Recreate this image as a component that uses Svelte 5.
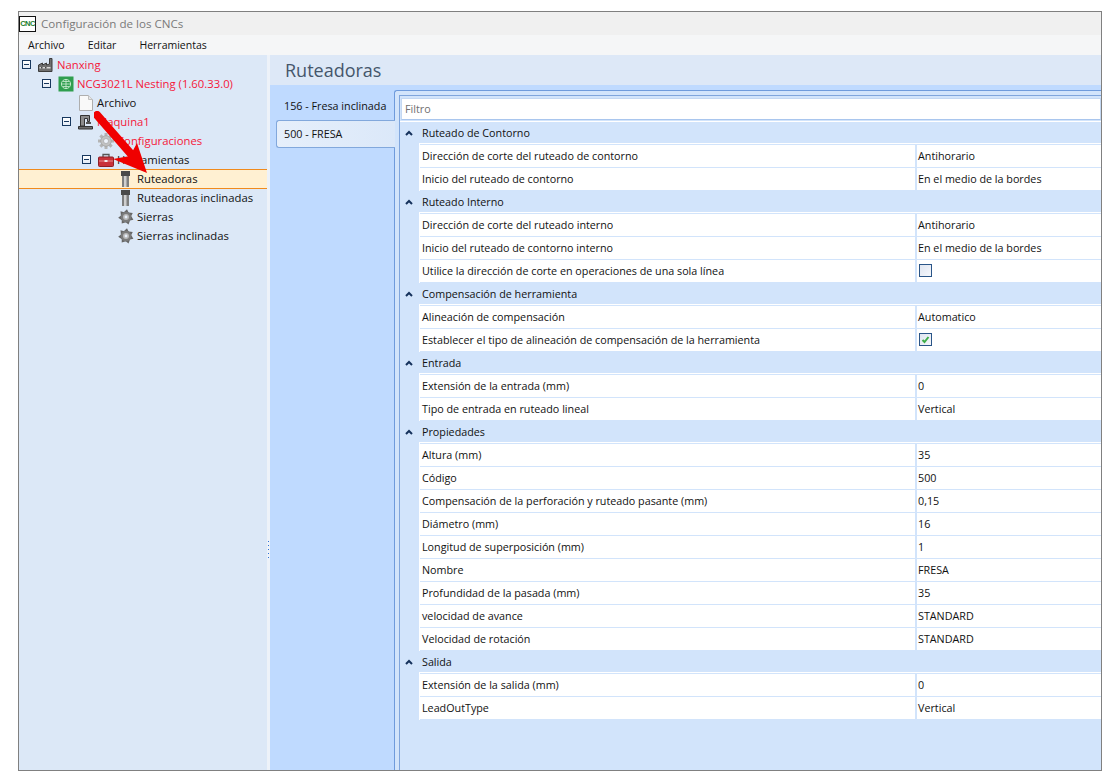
<script>
  const tree = [
    { d: 0, label: 'Nanxing', icon: 'factory', exp: true, red: true },
    { d: 1, label: 'NCG3021L Nesting (1.60.33.0)', icon: 'chip', exp: true, red: true },
    { d: 2, label: 'Archivo', icon: 'doc' },
    { d: 2, label: 'Maquina1', icon: 'machine', exp: true, red: true },
    { d: 3, label: 'Configuraciones', icon: 'gear', red: true },
    { d: 3, label: 'Herramientas', icon: 'toolbox', exp: true },
    { d: 4, label: 'Ruteadoras', icon: 'bit', sel: true },
    { d: 4, label: 'Ruteadoras inclinadas', icon: 'bit' },
    { d: 4, label: 'Sierras', icon: 'saw' },
    { d: 4, label: 'Sierras inclinadas', icon: 'saw' }
  ];

  const groups = [
    { title: 'Ruteado de Contorno', rows: [
      ['Dirección de corte del ruteado de contorno', 'Antihorario'],
      ['Inicio del ruteado de contorno', 'En el medio de la bordes']
    ]},
    { title: 'Ruteado Interno', rows: [
      ['Dirección de corte del ruteado interno', 'Antihorario'],
      ['Inicio del ruteado de contorno interno', 'En el medio de la bordes'],
      ['Utilice la dirección de corte en operaciones de una sola línea', false]
    ]},
    { title: 'Compensación de herramienta', rows: [
      ['Alineación de compensación', 'Automatico'],
      ['Establecer el tipo de alineación de compensación de la herramienta', true]
    ]},
    { title: 'Entrada', rows: [
      ['Extensión de la entrada (mm)', '0'],
      ['Tipo de entrada en ruteado lineal', 'Vertical']
    ]},
    { title: 'Propiedades', rows: [
      ['Altura (mm)', '35'],
      ['Código', '500'],
      ['Compensación de la perforación y ruteado pasante (mm)', '0,15'],
      ['Diámetro (mm)', '16'],
      ['Longitud de superposición (mm)', '1'],
      ['Nombre', 'FRESA'],
      ['Profundidad de la pasada (mm)', '35'],
      ['velocidad de avance', 'STANDARD'],
      ['Velocidad de rotación', 'STANDARD']
    ]},
    { title: 'Salida', rows: [
      ['Extensión de la salida (mm)', '0'],
      ['LeadOutType', 'Vertical']
    ]}
  ];

  const teeth = Array.from({ length: 8 }, (_, i) => i * 45);
  const blades = Array.from({ length: 7 }, (_, i) => (i * 360) / 7);
</script>

<div class="page">
  <div class="win">
    <div class="title">
      <span class="logo">CNC</span>
      <span class="title-text">Configuración de los CNCs</span>
    </div>
    <div class="menu">
      <span>Archivo</span><span>Editar</span><span>Herramientas</span>
    </div>
    <div class="main">
      <div class="tree">
        {#each tree as n}
          <div class="node" class:sel={n.sel} class:red={n.red} style="padding-left:{3 + 20 * n.d}px">
            <span class="exp-slot">
              {#if n.exp}<span class="exp"></span>{/if}
            </span>
            <svg class="ico" viewBox="0 0 16 16" width="16" height="16">
              {#if n.icon === 'factory'}
                <path d="M.5 14.500V8l4-2v2l4-2v2l3-1V1.500h2.500v13z" fill="#6f6f6f" stroke="#3c3c3c" stroke-width="1"/>
                <path d="M1.500 10h11v1.500h-11z" fill="#d8d8d8"/>
                <path d="M3 10h1.500v1.500H3zM7 10h1.500v1.500H7z" fill="#444"/>
              {:else if n.icon === 'chip'}
                <rect x="0.500" y="0.500" width="15" height="15" fill="#2f9e4f"/>
                <circle cx="8" cy="8" r="4.600" fill="none" stroke="#cfeed5" stroke-width=".9"/>
                <path d="M3.500 8h9M8 3.500v9M5 5.500h6M5 10.500h6" stroke="#cfeed5" stroke-width=".8"/>
              {:else if n.icon === 'doc'}
                <path d="M1.500 .5h9l4 4v11h-13z" fill="#f9f9f9" stroke="#aeaeae"/>
                <path d="M10.500 .5v4h4" fill="#e6e6e6" stroke="#c0c0c0"/>
              {:else if n.icon === 'machine'}
                <path d="M2.500 1.500h9v6h-2V4.500h-3v7.500h-4z" fill="#8c8c8c" stroke="#333" stroke-width="1"/>
                <path d="M8 8h5v2H8z" fill="#555"/>
                <path d="M.5 12.500h14v2.500H.5z" fill="#6d6d6d" stroke="#333" stroke-width="1"/>
              {:else if n.icon === 'gear'}
                <g transform="translate(8 8)">
                  {#each teeth as a}
                    <rect x="-1.500" y="-8" width="3" height="4" fill="#b4b4b4" transform="rotate({a})"/>
                  {/each}
                  <circle r="5.300" fill="#c2c2c2" stroke="#9a9a9a" stroke-width=".6"/>
                  <circle r="2.500" fill="#eef3fa" stroke="#9a9a9a" stroke-width=".6"/>
                </g>
              {:else if n.icon === 'toolbox'}
                <path d="M5 5V2.500h6V5" fill="none" stroke="#555" stroke-width="1.300"/>
                <rect x="0.500" y="5" width="15" height="9.500" rx="1" fill="#c8323a" stroke="#8e1f25"/>
                <path d="M1 9h14" stroke="#e98a8d"/>
                <rect x="6.500" y="8" width="3" height="2" fill="#eee"/>
              {:else if n.icon === 'bit'}
                <rect x="3" y="0" width="9" height="5" fill="#4a4a4a"/>
                <rect x="4" y="5" width="7" height="12" fill="#7e7e7e"/>
                <rect x="6" y="5" width="2.500" height="12" fill="#cfcfcf"/>
              {:else if n.icon === 'saw'}
                <g transform="translate(8 8)">
                  {#each blades as a}
                    <path d="M-3 -4L1 -7.800L3 -3.500z" fill="#666" transform="rotate({a})"/>
                  {/each}
                  <circle r="5.200" fill="#7b7b7b"/>
                  <circle r="3" fill="#b9b9b9"/>
                  <circle r="1.400" fill="#e6eef9"/>
                </g>
              {/if}
            </svg>
            <span class="lbl">{n.label}</span>
          </div>
        {/each}
        <svg class="arrow" viewBox="0 0 80 90" width="80" height="90">
          <path d="M3 4L44 51" stroke="#f00000" stroke-width="8" stroke-linecap="round" fill="none"/>
          <path d="M53 62L19 48L36 45L43 32z" fill="#f00000"/>
        </svg>
      </div>
      <div class="split">
        {#each [0, 1, 2, 3, 4] as _}<i></i>{/each}
      </div>
      <div class="right">
        <div class="head">Ruteadoras</div>
        <div class="body">
          <div class="tabs">
            <div class="tab">156 - Fresa inclinada</div>
            <div class="tab on">500 - FRESA</div>
          </div>
          <div class="panel">
            <div class="inner">
              <div class="filter-wrap">
                <div class="filter">Filtro</div>
              </div>
              {#each groups as g}
                <div class="ghead">
                  <svg class="chev" viewBox="0 0 8 6" width="8" height="6"><path d="M1 5L4 2L7 5" fill="none" stroke="#15325c" stroke-width="2"/></svg>
                  <span>{g.title}</span>
                </div>
                <div class="items">
                  {#each g.rows as r}
                    <div class="row">
                      <div class="name">{r[0]}</div>
                      <div class="val">
                        {#if typeof r[1] === 'boolean'}
                          <span class="cb">
                            {#if r[1]}
                              <svg viewBox="0 0 11 11" width="11" height="11"><path d="M2.500 6L4.500 8L8.500 3" fill="none" stroke="#3fae49" stroke-width="2"/></svg>
                            {/if}
                          </span>
                        {:else}
                          {r[1]}
                        {/if}
                      </div>
                    </div>
                  {/each}
                </div>
              {/each}
            </div>
          </div>
        </div>
      </div>
    </div>
  </div>
</div>

<style>
  :global(body) { margin: 0; background: #fff; }
  .page {
    box-sizing: border-box;
    width: 1115px;
    height: 778px;
    padding: 11px 13px 7px 18px;
    font-family: "Open Sans", "Noto Sans", sans-serif;
    font-size: 10.750px;
    color: #111;
  }
  .win {
    box-sizing: border-box;
    height: 100%;
    border: 1px solid #808080;
    display: flex;
    flex-direction: column;
    overflow: hidden;
  }
  .title {
    height: 23px;
    background: #f0f0f0;
    display: flex;
    align-items: center;
    gap: 5px;
    flex: none;
  }
  .logo {
    box-sizing: border-box;
    width: 17px;
    height: 16px;
    border: 1px solid #111;
    background: #fff;
    color: #1a7d2a;
    font: bold 7.500px/14px "Liberation Sans", sans-serif;
    text-align: center;
    letter-spacing: -.5px;
  }
  .title-text { color: #7a7a7a; font-size: 11.600px; }
  .menu {
    height: 20px;
    background: #f5f6f7;
    display: flex;
    align-items: center;
    flex: none;
    padding-left: 9px;
    gap: 23px;
    font-size: 10.500px;
  }
  .main { flex: 1; display: flex; min-height: 0; }
  .tree {
    width: 248px;
    flex: none;
    background: #dce8f7;
    position: relative;
    box-sizing: border-box;
  }
  .node {
    box-sizing: border-box;
    height: 19px;
    display: flex;
    align-items: center;
    font-size: 11.300px;
  }
  .node.sel {
    height: 20px;
    margin-bottom: -1px;
    padding-bottom: 1px;
    background: #fff0d2;
    border-top: 1px solid #f08a1c;
    border-bottom: 1px solid #f08a1c;
  }
  .node.red .lbl { color: #f5173a; }
  .exp-slot { width: 16px; flex: none; display: block; height: 9px; }
  .exp {
    display: block;
    box-sizing: border-box;
    width: 9px;
    height: 9px;
    border: 1px solid #17375e;
    background: linear-gradient(#fff, #e4ebf5);
    position: relative;
  }
  .exp::after {
    content: "";
    position: absolute;
    left: 1px;
    right: 1px;
    top: 3px;
    height: 1px;
    background: #17375e;
  }
  .ico { flex: none; }
  .lbl { margin-left: 3px; white-space: nowrap; }
  .arrow { position: absolute; left: 75px; top: 56px; pointer-events: none; }
  .split {
    width: 3px;
    flex: none;
    box-sizing: border-box;
    padding-top: 274px;
    background: #edf2f9;
    display: flex;
    flex-direction: column;
    align-items: center;
    justify-content: center;
    gap: 3px;
  }
  .split i { width: 1px; height: 1px; background: #2c72d8; display: block; }
  .right { flex: 1; min-width: 0; display: flex; flex-direction: column; }
  .head {
    height: 30px;
    flex: none;
    background: #dde8f7;
    color: #45566b;
    font-size: 18px;
    line-height: 30px;
    padding-left: 15px;
  }
  .body {
    flex: 1;
    min-height: 0;
    display: flex;
    background: #bfdaff;
    padding-top: 5px;
  }
  .tabs {
    width: 124px;
    flex: none;
    padding: 5px 0 0 6px;
    box-sizing: border-box;
  }
  .tab { height: 25px; line-height: 23px; padding-left: 8px; white-space: nowrap; }
  .tab.on {
    box-sizing: border-box;
    height: 28px;
    line-height: 26px;
    border: 1px solid #82a8dc;
    border-right: none;
    border-radius: 3px 0 0 3px;
    padding-left: 7px;
    margin-right: -1px;
    position: relative;
    z-index: 1;
    background: linear-gradient(90deg, #e6effb, #dbe8f9);
  }
  .panel {
    flex: 1;
    min-width: 0;
    background: #d2e4fb;
    border-top: 1px solid #6f9bdc;
    border-left: 1px solid #6f9bdc;
    border-top-left-radius: 3px;
    padding: 4px 0 0 4px;
  }
  .inner {
    height: 100%;
    box-sizing: border-box;
    border-top: 1px solid #7fa5dc;
    border-left: 1px solid #7fa5dc;
    background: #d2e4fb;
  }
  .filter-wrap {
    box-sizing: border-box;
    height: 26px;
    padding: 2px 0 0 1px;
    border-bottom: 1px solid #fff;
  }
  .filter {
    box-sizing: border-box;
    height: 22px;
    background: #fff;
    border: 1px solid #c4d8f2;
    border-bottom: 1px solid #a9c6ee;
    color: #707070;
    line-height: 20px;
    padding-left: 3px;
  }
  .ghead {
    height: 21px;
    display: flex;
    align-items: center;
    background: #d2e4fb;
  }
  .chev { margin-left: 5px; flex: none; }
  .ghead span { margin-left: 9px; }
  .items {
    margin-left: 19px;
    border-top: 1px solid #fff;
    border-left: 1px solid #fff;
  }
  .row {
    box-sizing: border-box;
    height: 23px;
    display: flex;
    background: #fff;
    border-bottom: 1px solid #d2e4fb;
    line-height: 23px;
  }
  .items .row:first-child { height: 24px; border-top: 1px solid #d2e4fb; }
  .name {
    box-sizing: border-box;
    width: 497px;
    padding-left: 2px;
    border-right: 2px solid #d2e4fb;
    flex: none;
    white-space: nowrap;
    overflow: hidden;
  }
  .val { padding-left: 1px; flex: 1; }
  .cb {
    box-sizing: border-box;
    width: 13px;
    height: 13px;
    border: 1px solid #2a5588;
    background: linear-gradient(135deg, #dfe5f0, #f5f7fb);
    display: block;
    margin: 4px 0 0 1px;
  }
  .cb svg { display: block; }
</style>
